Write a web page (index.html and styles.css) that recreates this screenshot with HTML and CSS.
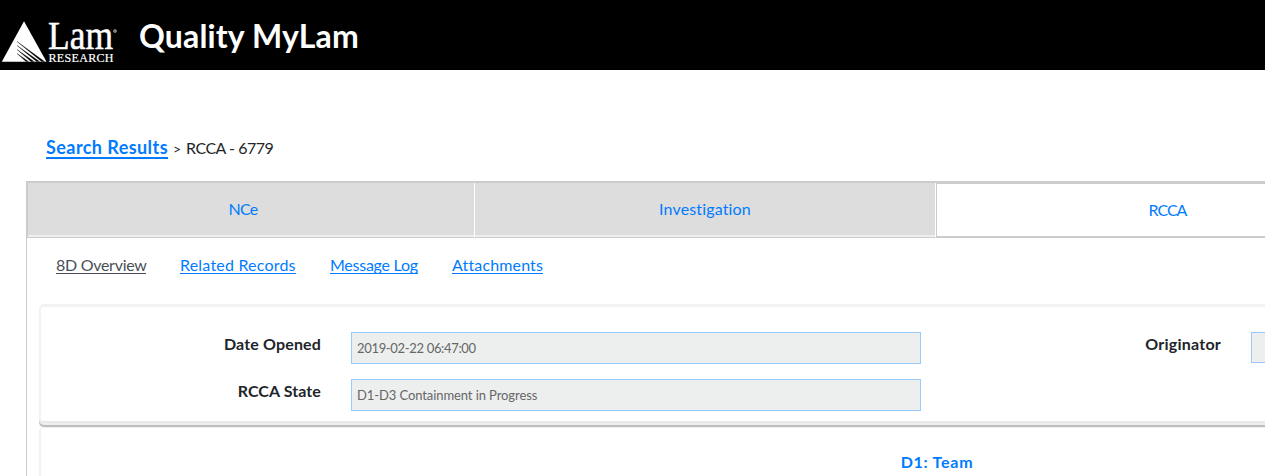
FILE: index.html
```html
<!DOCTYPE html>
<html lang="en">
<head>
<meta charset="utf-8">
<title>Quality MyLam</title>
<link rel="stylesheet" href="styles.css">
</head>
<body>
<header class="header">
  <svg class="logo" width="120" height="70" viewBox="0 0 120 70" role="img" aria-label="Lam Research">
    <path d="M24 21.300 46.500 61.700H1.800Z" fill="#fff"/>
    <path d="M17 41.500 44.500 61.500 41.500 61.500ZM17 45.500 39.500 61.500 36.500 61.500ZM17 49.500 34 61.500 31 61.500ZM17 53.500 28.500 61.500 26 61.500Z" stroke="#000" stroke-width=".3" fill="#000"/>
    <text class="logo-lam" x="48" y="48.500" textLength="65" lengthAdjust="spacingAndGlyphs">Lam</text>
    <text class="logo-sub" x="48.500" y="61.700" textLength="65" lengthAdjust="spacing">RESEARCH</text>
    <circle cx="115" cy="31" r="1.500" fill="#777" stroke="#999" stroke-width=".7"/>
  </svg>
  <h1 class="title">Quality MyLam</h1>
</header>
<nav class="crumbs"><a class="crumb-link">Search Results</a><span class="crumb-sep">&gt;</span><span class="crumb-now">RCCA - 6779</span></nav>
<main class="panel">
  <div class="tabs">
    <a class="tab tab-first"><span class="tab-nce">NCe</span></a>
    <a class="tab tab-second"><span class="tab-inv">Investigation</span></a>
    <a class="tab tab-active"><span class="tab-rcca">RCCA</span></a>
    <span class="tab tab-rest"></span>
  </div>
  <nav class="subnav">
    <a class="sub sub-current">8D Overview</a>
    <a class="sub sub-related">Related Records</a>
    <a class="sub sub-log">Message Log</a>
    <a class="sub sub-att">Attachments</a>
  </nav>
  <section class="card summary">
    <div class="field"><span class="label"><span class="label-date">Date Opened</span></span><div class="value"><span class="value-date">2019-02-22 06:47:00</span></div></div>
    <div class="field field-right"><span class="label"><span class="label-orig">Originator</span></span><div class="value value-short"></div></div>
    <div class="field"><span class="label"><span class="label-state">RCCA State</span></span><div class="value"><span class="value-state">D1-D3 Containment in Progress</span></div></div>
  </section>
  <section class="card team"><h2 class="team-title">D1: Team</h2></section>
</main>
</body>
</html>
```
FILE: styles.css
```css
* { box-sizing: border-box; }
html { overflow: hidden; }
body { margin: 0; width: 1265px; height: 476px; overflow: hidden; background: #fff; color: #212529; font: 16px/24px "Trebuchet MS", Lato, sans-serif; font-variant-ligatures: none; }
.header { display: flex; height: 70px; background: #000; color: #fff; }
.logo { display: block; flex: none; }
.logo-lam { font: 39px "Liberation Serif", serif; fill: #fff; stroke: #fff; stroke-width: .5px; }
.logo-sub { font: 12px "Liberation Serif", serif; fill: #fff; stroke: #fff; stroke-width: .2px; }
.title { margin: 0 0 0 19px; font-size: 32px; line-height: 72px; font-weight: 700; letter-spacing: .15px; white-space: nowrap; }
.crumbs { display: flex; align-items: baseline; height: 111px; padding: 66px 0 0 46px; white-space: nowrap; }
.crumb-link { color: #007bff; font-size: 18px; font-weight: 700; line-height: 20px; letter-spacing: .43px; border-bottom: 2px solid #007bff; width: 122px; }
.crumb-sep { margin-left: 5px; width: 13px; font-size: 14px; }
.crumb-now { letter-spacing: -.48px; }
.panel { width: 1820px; height: 295px; margin-left: 26px; border-left: 1px solid #ccc; }
.tabs { display: flex; height: 57px; border-top: 2px solid #ccc; }
.tab { display: flex; justify-content: center; background: #ddd; color: #007bff; padding-top: 14px; border-bottom: 1px solid #ccc; box-shadow: inset 0 -2px #eee; white-space: nowrap; }
.tab-first { width: 448px; border-left: 1px solid #ccc; border-right: 1px solid #fff; padding-right: 16px; }
.tab-second { width: 461px; border-right: 1px solid #fff; }
.tab-active { width: 463px; background: #fff; border: 1px solid #ccc; border-bottom-width: 2px; box-shadow: none; }
.tab-rest { flex: 1; }
.tab-nce { letter-spacing: -.8px; }
.tab-inv { letter-spacing: .15px; }
.tab-rcca { letter-spacing: -1px; }
.subnav { display: flex; gap: 34px; padding: 18px 0 0 29px; height: 66px; }
.sub { height: 18px; line-height: 18px; color: #007bff; border-bottom: 1px solid #007bff; white-space: nowrap; }
.sub-current { color: #495057; border-color: #495057; width: 90px; letter-spacing: -.28px; }
.sub-related { width: 116px; letter-spacing: .2px; }
.sub-log { width: 88px; letter-spacing: -.25px; }
.sub-att { width: 91px; letter-spacing: .15px; }
.card { width: 1796px; margin-left: 12px; border: 2px solid #f2f2f2; border-top-width: 3px; border-radius: 5px; }
.summary { display: grid; grid-template-columns: 900px 892px; grid-auto-rows: 32px; row-gap: 15px; height: 119px; padding-top: 25px; border-bottom-color: #e9e9e9; box-shadow: 0 2px #eee, 0 4px #bdbdbd, 0 5px #f0f0f0; }
.field { display: flex; }
.label { width: 280px; text-align: right; font-weight: 700; line-height: 24px; white-space: nowrap; }
.label-date { letter-spacing: .15px; }
.label-orig { letter-spacing: .23px; }
.label-state { letter-spacing: .1px; }
.value { width: 570px; height: 32px; margin-left: 30px; padding-left: 5px; background: #edefee; border: 1px solid #99caff; color: #666; font-size: 13px; line-height: 30px; white-space: nowrap; }
.value-short { height: 31px; }
.value-date { letter-spacing: -.33px; }
.value-state { letter-spacing: -.09px; }
.team { height: 50px; margin-top: 4px; padding-top: 21px; border-top: 1px solid #f2f2f2; border-bottom: 0; border-radius: 5px 5px 0 0; }
.team-title { margin: 0; color: #007bff; font-size: 16px; line-height: 26px; letter-spacing: .75px; text-align: center; }
```
